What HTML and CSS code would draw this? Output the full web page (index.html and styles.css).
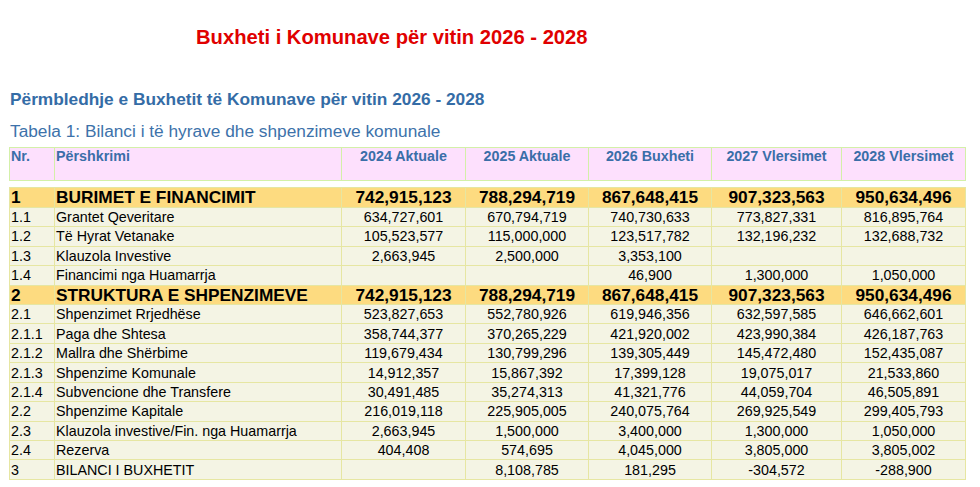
FILE: index.html
```html
<!DOCTYPE html>
<html lang="sq">
<head>
<meta charset="utf-8">
<title>Buxheti i Komunave</title>
<link rel="stylesheet" href="styles.css">
</head>
<body>
<div class="page">
  <h1 class="title">Buxheti i Komunave për vitin 2026 - 2028</h1>
  <h2 class="subtitle">Përmbledhje e Buxhetit të Komunave për vitin 2026 - 2028</h2>
  <p class="caption">Tabela 1: Bilanci i të hyrave dhe shpenzimeve komunale</p>

  <table class="grid head">
    <colgroup>
      <col class="c-nr"><col class="c-desc"><col class="c-y1"><col class="c-y2"><col class="c-y3"><col class="c-y4"><col class="c-y5">
    </colgroup>
    <tr>
      <th class="left">Nr.</th>
      <th class="left">Përshkrimi</th>
      <th>2024 Aktuale</th>
      <th>2025 Aktuale</th>
      <th>2026 Buxheti</th>
      <th>2027 Vlersimet</th>
      <th>2028 Vlersimet</th>
    </tr>
  </table>

  <table class="grid body">
    <colgroup>
      <col class="c-nr"><col class="c-desc"><col class="c-y1"><col class="c-y2"><col class="c-y3"><col class="c-y4"><col class="c-y5">
    </colgroup>
    <tr class="major first"><td>1</td><td>BURIMET E FINANCIMIT</td><td>742,915,123</td><td>788,294,719</td><td>867,648,415</td><td>907,323,563</td><td>950,634,496</td></tr>
    <tr><td>1.1</td><td>Grantet Qeveritare</td><td>634,727,601</td><td>670,794,719</td><td>740,730,633</td><td>773,827,331</td><td>816,895,764</td></tr>
    <tr><td>1.2</td><td>Të Hyrat Vetanake</td><td>105,523,577</td><td>115,000,000</td><td>123,517,782</td><td>132,196,232</td><td>132,688,732</td></tr>
    <tr><td>1.3</td><td>Klauzola Investive</td><td>2,663,945</td><td>2,500,000</td><td>3,353,100</td><td></td><td></td></tr>
    <tr><td>1.4</td><td>Financimi nga Huamarrja</td><td></td><td></td><td>46,900</td><td>1,300,000</td><td>1,050,000</td></tr>
    <tr class="major"><td>2</td><td>STRUKTURA E SHPENZIMEVE</td><td>742,915,123</td><td>788,294,719</td><td>867,648,415</td><td>907,323,563</td><td>950,634,496</td></tr>
    <tr><td>2.1</td><td>Shpenzimet Rrjedhëse</td><td>523,827,653</td><td>552,780,926</td><td>619,946,356</td><td>632,597,585</td><td>646,662,601</td></tr>
    <tr><td>2.1.1</td><td>Paga dhe Shtesa</td><td>358,744,377</td><td>370,265,229</td><td>421,920,002</td><td>423,990,384</td><td>426,187,763</td></tr>
    <tr><td>2.1.2</td><td>Mallra dhe Shërbime</td><td>119,679,434</td><td>130,799,296</td><td>139,305,449</td><td>145,472,480</td><td>152,435,087</td></tr>
    <tr><td>2.1.3</td><td>Shpenzime Komunale</td><td>14,912,357</td><td>15,867,392</td><td>17,399,128</td><td>19,075,017</td><td>21,533,860</td></tr>
    <tr><td>2.1.4</td><td>Subvencione dhe Transfere</td><td>30,491,485</td><td>35,274,313</td><td>41,321,776</td><td>44,059,704</td><td>46,505,891</td></tr>
    <tr><td>2.2</td><td>Shpenzime Kapitale</td><td>216,019,118</td><td>225,905,005</td><td>240,075,764</td><td>269,925,549</td><td>299,405,793</td></tr>
    <tr><td>2.3</td><td>Klauzola investive/Fin. nga Huamarrja</td><td>2,663,945</td><td>1,500,000</td><td>3,400,000</td><td>1,300,000</td><td>1,050,000</td></tr>
    <tr><td>2.4</td><td>Rezerva</td><td>404,408</td><td>574,695</td><td>4,045,000</td><td>3,805,000</td><td>3,805,002</td></tr>
    <tr><td>3</td><td>BILANCI I BUXHETIT</td><td></td><td>8,108,785</td><td>181,295</td><td>-304,572</td><td>-288,900</td></tr>
  </table>
</div>
</body>
</html>
```

FILE: styles.css
```css
html, body {
  margin: 0;
  padding: 0;
  background: #ffffff;
}

.page {
  font-family: "Liberation Sans", Arial, sans-serif;
  padding: 25px 0 0 9px;
  width: 956px;
}

.title {
  margin: 0;
  padding-left: 187px;
  font-size: 20.2px;
  line-height: 24px;
  font-weight: bold;
  color: #e00000;
}

.subtitle {
  margin: 40px 0 0 1px;
  font-size: 17.3px;
  line-height: 20px;
  font-weight: bold;
  color: #346ca6;
}

.caption {
  margin: 12px 0 0 1px;
  font-size: 17.3px;
  line-height: 20px;
  color: #3d72aa;
}

.grid {
  border-collapse: collapse;
  table-layout: fixed;
  width: 956px;
}

.c-nr { width: 45px; }
.c-desc { width: 287px; }
.c-y1 { width: 124px; }
.c-y2 { width: 123px; }
.c-y3 { width: 123px; }
.c-y4 { width: 130px; }
.c-y5 { width: 124px; }

.head {
  margin-top: 6px;
}

.head th {
  height: 32px;
  padding: 0 1px;
  vertical-align: top;
  text-align: center;
  background: #fde0fd;
  border: 1.5px solid #d3f0a8;
  color: #3a6ea8;
  font-size: 14.3px;
  line-height: 16px;
  font-weight: bold;
}

.head th.left {
  text-align: left;
}

.body {
  margin-top: 6px;
}

.body td {
  height: 19.45px;
  padding: 0 1px;
  background: #f4f4e4;
  border: 1.5px solid #e6e6a2;
  color: #000000;
  font-size: 14.3px;
  line-height: 16px;
  text-align: center;
  white-space: nowrap;
  box-sizing: border-box;
}

.body td:nth-child(1),
.body td:nth-child(2) {
  text-align: left;
}

.body tr.major td {
  background: #fddb80;
  font-size: 17.3px;
  font-weight: bold;
  line-height: 18px;
}

.body tr.first td {
  height: 19.8px;
}
```
